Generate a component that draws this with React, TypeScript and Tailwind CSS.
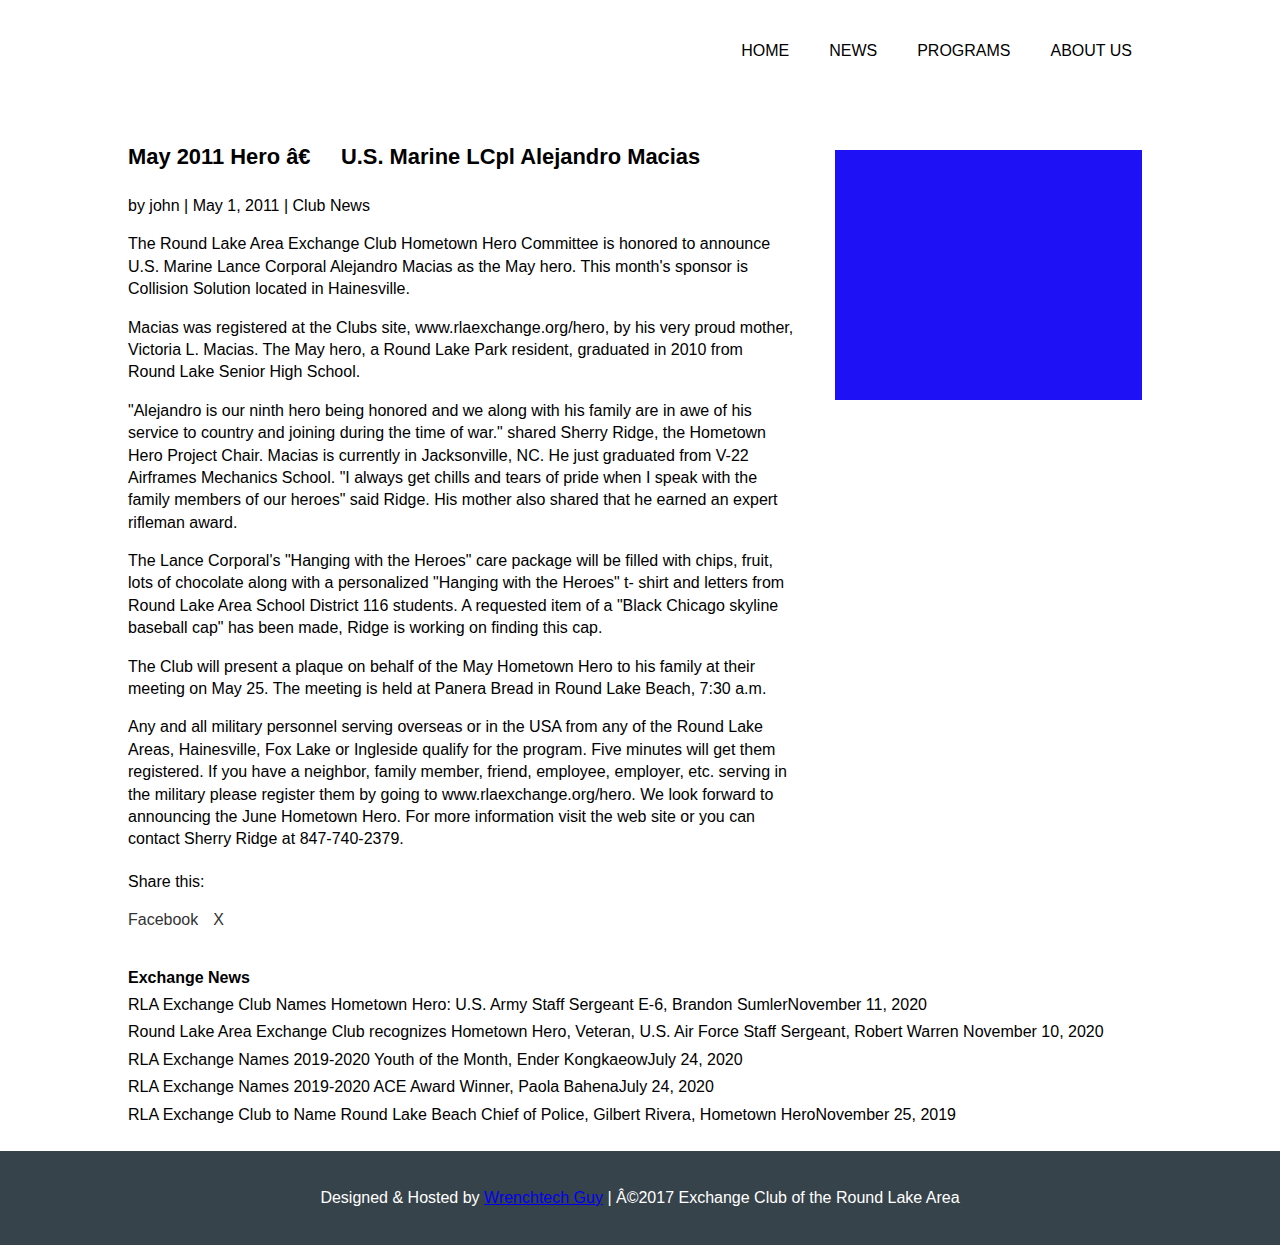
const navItems = ["HOME", "NEWS", "PROGRAMS", "ABOUT US"];

const paragraphs = [
  "The Round Lake Area Exchange Club Hometown Hero Committee is honored to announce U.S. Marine Lance Corporal Alejandro Macias as the May hero. This month's sponsor is Collision Solution located in Hainesville.",
  "Macias was registered at the Clubs site, www.rlaexchange.org/hero, by his very proud mother, Victoria L. Macias. The May hero, a Round Lake Park resident, graduated in 2010 from Round Lake Senior High School.",
  "\"Alejandro is our ninth hero being honored and we along with his family are in awe of his service to country and joining during the time of war.\" shared Sherry Ridge, the Hometown Hero Project Chair. Macias is currently in Jacksonville, NC. He just graduated from V-22 Airframes Mechanics School. \"I always get chills and tears of pride when I speak with the family members of our heroes\" said Ridge. His mother also shared that he earned an expert rifleman award.",
  "The Lance Corporal's \"Hanging with the Heroes\" care package will be filled with chips, fruit, lots of chocolate along with a personalized \"Hanging with the Heroes\" t- shirt and letters from Round Lake Area School District 116 students. A requested item of a \"Black Chicago skyline baseball cap\" has been made, Ridge is working on finding this cap.",
  "The Club will present a plaque on behalf of the May Hometown Hero to his family at their meeting on May 25. The meeting is held at Panera Bread in Round Lake Beach, 7:30 a.m.",
  "Any and all military personnel serving overseas or in the USA from any of the Round Lake Areas, Hainesville, Fox Lake or Ingleside qualify for the program. Five minutes will get them registered. If you have a neighbor, family member, friend, employee, employer, etc. serving in the military please register them by going to www.rlaexchange.org/hero. We look forward to announcing the June Hometown Hero. For more information visit the web site or you can contact Sherry Ridge at 847-740-2379.",
];

const news = [
  ["RLA Exchange Club Names Hometown Hero: U.S. Army Staff Sergeant E-6, Brandon Sumler", "November 11, 2020"],
  ["Round Lake Area Exchange Club recognizes Hometown Hero, Veteran, U.S. Air Force Staff Sergeant, Robert Warren ", "November 10, 2020"],
  ["RLA Exchange Names 2019-2020 Youth of the Month, Ender Kongkaeow", "July 24, 2020"],
  ["RLA Exchange Names 2019-2020 ACE Award Winner, Paola Bahena", "July 24, 2020"],
  ["RLA Exchange Club to Name Round Lake Beach Chief of Police, Gilbert Rivera, Hometown Hero", "November 25, 2019"],
];

export default function App() {
  return (
    <div className="min-h-[1245px] bg-white text-black font-['Liberation_Sans',Arial,sans-serif] text-[16px] leading-[1.4] flex flex-col">
      <header className="h-[100px] w-[1024px] mx-auto flex items-center justify-end pr-[20px] pt-[2px]">
        <nav className="flex gap-[40px]">
          {navItems.map((n) => (
            <a key={n} href="#" className="text-black">
              {n}
            </a>
          ))}
        </nav>
      </header>

      <main className="w-[1024px] mx-auto pt-[45px]">
        <div className="grid grid-cols-[666px_307px] gap-[41px]">
          <article>
            <h1 className="text-[21.9px] font-bold leading-[24px] mb-[26px]">
              May 2011 Hero â€{"\u00a0\u00a0\u00a0\u00a0\u00a0"}U.S. Marine LCpl Alejandro Macias
            </h1>
            <p className="mb-[16px]">by john | May 1, 2011 | Club News</p>
            {paragraphs.map((p, i) => (
              <p key={i} className="mb-[16px]">
                {p}
              </p>
            ))}
            <p className="mt-[20px] mb-[16px]">Share this:</p>
            <div className="flex gap-[15px] text-[#333]">
              <a href="#">Facebook</a>
              <a href="#">X</a>
            </div>
          </article>
          <aside className="pt-[5px]">
            <div className="w-[307px] h-[250px] bg-[#1e11f5]" />
          </aside>
        </div>

        <section className="mt-[35px] flex flex-col gap-[5px] pb-[25px]">
          <h2 className="font-bold">Exchange News</h2>
          {news.map(([t, d]) => (
            <div key={t}>
              <a href="#">{t}</a>
              <span>{d}</span>
            </div>
          ))}
        </section>
      </main>

      <footer className="mt-auto bg-[#37434a] text-white text-center pt-[36px] pb-[36px]">
        Designed &amp; Hosted by{" "}
        <a href="#" className="text-[#0000ee] underline">
          Wrenchtech Guy
        </a>{" "}
        | Â©2017 Exchange Club of the Round Lake Area
      </footer>
    </div>
  );
}
